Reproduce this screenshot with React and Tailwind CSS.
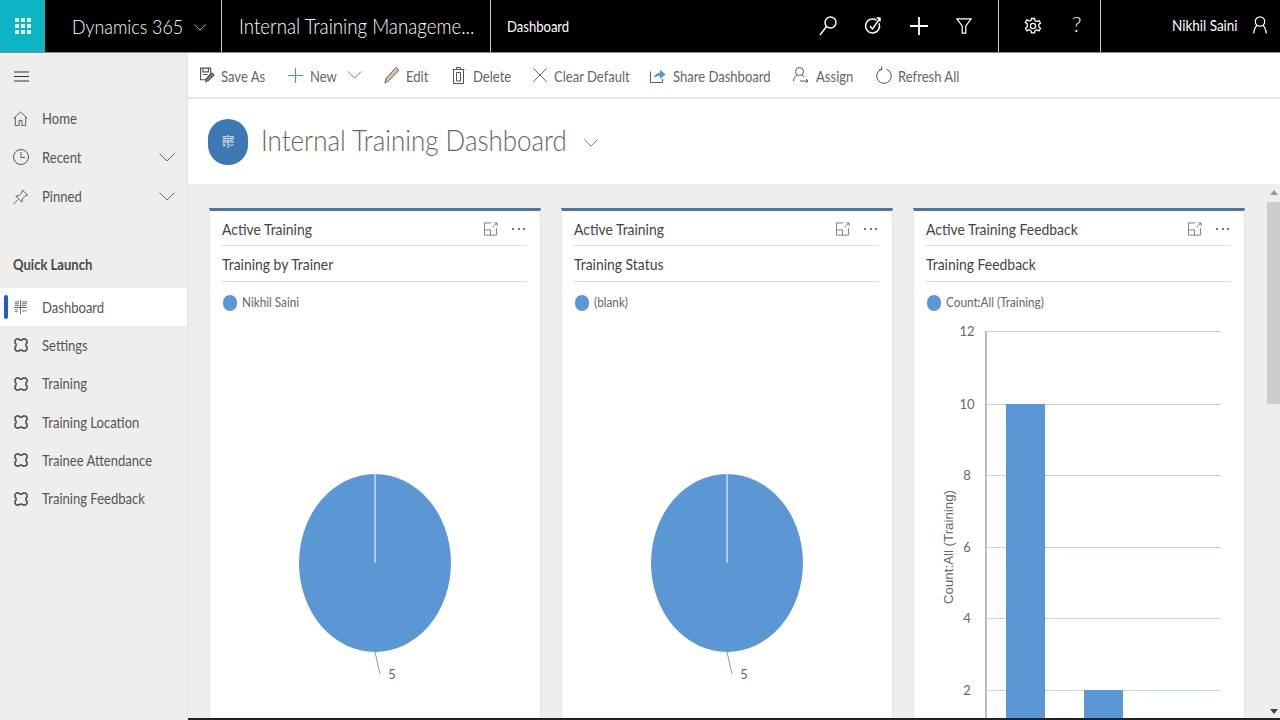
import React from 'react'

// text in the shot is squeezed horizontally, so labels get a fixed box and a scale-x
const T = ({ children, className = '' }) => (
  <span className={`inline-block origin-left scale-x-[.87] whitespace-nowrap ${className}`}>{children}</span>
)

const Chevron = ({ className }) => (
  <svg viewBox="0 0 16 9" className={className} fill="none" stroke="currentColor" strokeWidth="1">
    <path d="M.5.5 8 8 15.500.5" />
  </svg>
)

const Puzzle = () => (
  <svg viewBox="0 0 16 16" className="w-[16px] h-[18px] shrink-0" fill="none" stroke="#444" strokeWidth="1.500" strokeLinejoin="round">
    <path d="M3.500 2H6c.3 1.500 3.700 1.500 4 0h2.500L14 3.500V6c-1.500.3-1.500 3.700 0 4v2.500L12.500 14H10c-.3-1.500-3.700-1.500-4 0H3.500L2 12.500V10c1.500-.3 1.500-3.700 0-4V3.500z" />
  </svg>
)

const DashIcon = ({ className, stroke = '#666' }) => (
  <svg viewBox="0 0 16 16" className={className} fill="none" stroke={stroke} strokeWidth="1">
    <path d="M8 .5v15M2 2.500h4.500M2 4.500h4.500M2 6.500h4.500M9.500 2.500H15M9.500 4.500H15M9.500 6.500H14M1 8.500h14M2 11h3M2 13h3M10 11l1.500 2 1.500-1.500 1.500 1" />
  </svg>
)

const SideItem = ({ label, chevron, icon, active }) => (
  <div className={`h-[38.300px] flex items-center relative ${active ? 'bg-white' : ''}`}>
    {active && <div className="absolute left-[4px] top-[7px] w-[4px] h-[24px] rounded-sm bg-[#1f5fbf]" />}
    <div className="w-[42px] pl-[13px] flex items-center">{icon || <Puzzle />}</div>
    <T className="text-[15px] text-[#555]">{label}</T>
    {chevron && <Chevron className="w-[16px] h-[9px] ml-auto mr-[12px] text-[#666]" />}
  </div>
)

const Tool = ({ icon, label, className = '', labelWidth }) => (
  <div className={`flex items-center gap-[6px] text-[15px] text-[#666] ${className}`}>
    {icon}
    <span className={`pt-[2px] ${labelWidth}`}><T>{label}</T></span>
  </div>
)

const Card = ({ title, sub, legend, children }) => (
  <div className="w-[332px] h-[540px] shrink-0 bg-white border-x border-[#e3e3e3] border-t-[3px] border-t-[#4a76a8] pl-[12px] pr-[13px]">
    <div className="h-[35px] pt-[2px] border-b border-[#ddd] flex items-center justify-between">
      <T className="text-[16px] text-[#444]">{title}</T>
      <div className="flex items-center gap-[14px] pr-[2px] text-[#777]">
        <svg viewBox="0 0 15 14" className="w-[14px] h-[14px]" fill="none" stroke="currentColor">
          <path d="M8 .5H.5v13h13V6M.5 8H7v5.500M9 5l5-4.500M10.500.500H14V4" />
        </svg>
        <span className="w-[13px] flex justify-between">
          <i className="w-[2px] h-[2px] bg-[#777]" />
          <i className="w-[2px] h-[2px] bg-[#777]" />
          <i className="w-[2px] h-[2px] bg-[#777]" />
        </span>
      </div>
    </div>
    <div className="h-[36px] pt-[1px] border-b border-[#ddd] flex items-center text-[16px] text-[#444]"><T>{sub}</T></div>
    <div className="h-[41px] flex items-center pl-[1px] gap-[5px] text-[13.500px] text-[#666]">
      <span className="w-[14px] h-[16px] rounded-full bg-[#5b97d5]" />
      <T>{legend}</T>
    </div>
    {children}
  </div>
)

// chart area starts 323px from the top of the page
const Pie = () => (
  <svg viewBox="0 0 305 400" className="w-[305px] h-[400px] text-[#666]">
    <ellipse cx="153" cy="240" rx="76" ry="89" fill="#5b97d5" />
    <path d="M153 151v89" stroke="#fff" strokeWidth="1" />
    <path d="M153 329l5 22" stroke="#7a9cbf" strokeWidth="1" fill="none" />
    <text x="170" y="356" fontSize="13" textAnchor="middle" fill="#666">5</text>
  </svg>
)

const ticks = [
  { v: 12, y: 8 },
  { v: 10, y: 81 },
  { v: 8, y: 152 },
  { v: 6, y: 224 },
  { v: 4, y: 295 },
  { v: 2, y: 367 },
]

const Bars = () => (
  <svg viewBox="0 0 305 400" className="w-[305px] h-[400px]">
    {ticks.map((t) => (
      <g key={t.v}>
        <path d={`M60 ${t.y + 0.5}h235`} stroke="#c3d5dc" strokeWidth="1" />
        <text x="41" y={t.y + 5} fontSize="13" textAnchor="middle" fill="#666">{t.v}</text>
      </g>
    ))}
    <path d="M60 8v392" stroke="#a6a6a6" strokeWidth="1.500" />
    <rect x="80" y="81" width="39" height="319" fill="#5b97d5" />
    <rect x="158" y="367" width="39" height="33" fill="#5b97d5" />
    <text transform="translate(27 224) rotate(-90)" fontSize="13.300" textAnchor="middle" fill="#666" fontFamily="Liberation Sans">Count:All (Training)</text>
  </svg>
)

const App = () => {
  return (
    <div className="w-[1280px] h-[720px] overflow-hidden flex flex-col bg-white font-['Lato','Noto_Sans',sans-serif]">
      {/* top bar */}
      <header className="h-[53px] shrink-0 bg-black border-b border-[#8a8a8a] flex items-stretch text-white">
        <div className="w-[45px] bg-[#0cb4c4] flex items-center justify-center">
          <div className="grid grid-cols-3 gap-[2px]">
            {[...Array(9)].map((_, i) => (
              <span key={i} className="w-[4px] h-[4px] bg-white/90" />
            ))}
          </div>
        </div>
        <div className="w-[177px] pl-[27px] flex items-center border-r border-[#ccc]">
          <span className="w-[109px]"><T className="text-[20.500px] font-light">Dynamics 365</T></span>
          <Chevron className="w-[12px] h-[7px] ml-[13px] mt-[3px]" />
        </div>
        <div className="w-[269px] pl-[17px] flex items-center border-r border-[#ccc]">
          <T className="text-[21.500px] font-light">Internal Training Manageme...</T>
        </div>
        <div className="pl-[16px] flex items-center text-[15px]"><T>Dashboard</T></div>
        <div className="ml-auto flex items-center w-[188px] border-r border-[#ccc]">
          <svg viewBox="0 0 18 20" className="w-[18px] h-[20px] ml-[8px]" fill="none" stroke="#fff" strokeWidth="1.400">
            <circle cx="11.500" cy="6.500" r="5.500" /><path d="M7.500 10.500 1 19" />
          </svg>
          <svg viewBox="0 0 18 20" className="w-[18px] h-[20px] ml-[27px]" fill="none" stroke="#fff" strokeWidth="1.400">
            <path d="M12.500 4.200a7 7 0 1 0 2.500 3M6 10l2.500 3L16 2M12.500 2H16v3.500" />
          </svg>
          <svg viewBox="0 0 18 18" className="w-[18px] h-[18px] ml-[28px]" fill="none" stroke="#fff" strokeWidth="1.800">
            <path d="M9 0v18M0 9h18" />
          </svg>
          <svg viewBox="0 0 18 18" className="w-[16px] h-[18px] ml-[28px]" fill="none" stroke="#fff" strokeWidth="1.400">
            <path d="M1 1h16l-6 8v8H7V9z" />
          </svg>
        </div>
        <div className="w-[102px] flex items-center border-r border-[#ccc]">
          <svg viewBox="0 0 24 24" className="w-[18px] h-[20px] ml-[25px]" fill="none" stroke="#fff" strokeWidth="1.700">
            <circle cx="12" cy="12" r="3.500" />
            <path d="M10 2h4l.7 3 2.500 1.200 2.800-1.500 2 3.400-2.300 2.100v2.800l2.300 2.100-2 3.400-2.800-1.500-2.500 1.200-.7 3h-4l-.7-3-2.500-1.200-2.800 1.500-2-3.400 2.300-2.100V9.200L1.800 7.100l2-3.400 2.800 1.500L9.300 5z" />
          </svg>
          <span className="ml-[30px] text-[22px] font-light leading-none pb-[4px]">?</span>
        </div>
        <div className="w-[179px] flex items-center pl-[71px] text-[15.500px]">
          <span className="w-[65px]"><T>Nikhil Saini</T></span>
          <svg viewBox="0 0 14 18" className="w-[14px] h-[18px] ml-[16px] mb-[3px]" fill="none" stroke="#fff" strokeWidth="1.300">
            <circle cx="7" cy="5.500" r="4.700" /><path d="M.7 17.500c.5-5 2.500-7.500 3.500-8.300M13.300 17.500c-.5-5-2.500-7.500-3.500-8.300" />
          </svg>
        </div>
      </header>

      <div className="flex flex-1 min-h-0">
        {/* left nav */}
        <aside className="w-[188px] shrink-0 bg-[#eeeeee] border-r border-[#e3e3e3]">
          <div className="h-[46px] pl-[14px] flex items-center">
            <svg viewBox="0 0 15 11" className="w-[15px] h-[11px]" stroke="#333" strokeWidth="1.200">
              <path d="M0 1h15M0 5.500h15M0 10h15" />
            </svg>
          </div>
          <div>
            <SideItem label="Home" icon={
              <svg viewBox="0 0 16 16" className="w-[15px] h-[15px]" fill="none" stroke="#555">
                <path d="M.5 8 8 1l7.500 7M2.500 6.500v9h4V10h3v5.500h4v-9" />
              </svg>
            } />
            <div className="h-[1px]" />
            <SideItem label="Recent" chevron icon={
              <svg viewBox="0 0 16 16" className="w-[16px] h-[16px]" fill="none" stroke="#555">
                <circle cx="8" cy="8" r="7.500" /><path d="M8 3v5.500h4" />
              </svg>
            } />
            <div className="h-[1px]" />
            <SideItem label="Pinned" chevron icon={
              <svg viewBox="0 0 16 16" className="w-[15px] h-[16px]" fill="none" stroke="#555">
                <path d="M10 .5 15.500 6l-2 .5-3.500 3.500-.5 3.500-6.500-6.500 3.500-.5L10 2.500zM5 11l-4.500 4.500" />
              </svg>
            } />
          </div>
          <div className="h-[69px] flex items-end pb-[9px] pl-[13px] text-[15px] font-bold text-[#4a4a4a]">
            <T>Quick Launch</T>
          </div>
          <div className="mt-[3px]">
            <SideItem active label="Dashboard" icon={<DashIcon className="w-[15px] h-[16px]" />} />
            <SideItem label="Settings" />
            <SideItem label="Training" />
            <SideItem label="Training Location" />
            <SideItem label="Trainee Attendance" />
            <SideItem label="Training Feedback" />
          </div>
        </aside>

        <main className="flex-1 min-w-0 flex flex-col">
          {/* command bar */}
          <div className="h-[46px] shrink-0 border-b-2 border-[#e6e6e6] flex items-center pl-[12px]">
            <Tool labelWidth="w-[45px]" label="Save As" icon={
              <svg viewBox="0 0 16 16" className="w-[15px] h-[16px]" fill="none" stroke="#555" strokeWidth="1.200">
                <path d="M.6.6h10.800v6L6 13H.6zM3 .6v4h6v-4M3 7.500h5" /><path d="m6 15 1-3 6-6 2 2-6 6z" fill="#888" />
              </svg>
            } />
            <Tool className="ml-[22px] gap-[7px]" labelWidth="w-[26px]" label="New" icon={
              <svg viewBox="0 0 15 15" className="w-[15px] h-[15px]" stroke="#5a9c82" strokeWidth="1.200"><path d="M7.500 0v15M0 7.500h15" /></svg>
            } />
            <Chevron className="w-[15px] h-[8px] ml-[11px] text-[#666]" />
            <Tool className="ml-[22px]" labelWidth="w-[22px]" label="Edit" icon={
              <svg viewBox="0 0 16 18" className="w-[16px] h-[18px]" fill="#d8c49a" stroke="#666">
                <path d="m.8 17 1.500-5L12 1.500l3 2.800L5 14.500z" />
              </svg>
            } />
            <Tool className="ml-[24px] gap-[8px]" labelWidth="w-[37px]" label="Delete" icon={
              <svg viewBox="0 0 13 17" className="w-[13px] h-[17px]" fill="none" stroke="#555">
                <path d="M1.500 3v13.500h10V3M.5 2.500h12M4.500 2.500V.5h4v2M4.500 5.500v8.500h4V5.500z" />
              </svg>
            } />
            <Tool className="ml-[23px] gap-[7px]" labelWidth="w-[75px]" label="Clear Default" icon={
              <svg viewBox="0 0 14 14" className="w-[14px] h-[14px]" stroke="#666"><path d="M.5.5l13 13M13.500.5l-13 13" /></svg>
            } />
            <Tool className="ml-[21px] gap-[7px]" labelWidth="w-[99px]" label="Share Dashboard" icon={
              <svg viewBox="0 0 16 15" className="w-[16px] h-[15px]" fill="none">
                <path d="M.5 3.500v11h12V11" stroke="#2d6ca8" />
                <path d="M4 10c.5-3.500 3-5 6-5V1.500l5.500 5-5.500 4.500V8c-2.500 0-4.500.5-6 2z" fill="#5b97d5" />
              </svg>
            } />
            <Tool className="ml-[21px] gap-[7px]" labelWidth="w-[38px]" label="Assign" icon={
              <svg viewBox="0 0 16 17" className="w-[16px] h-[17px]" fill="none" stroke="#555">
                <circle cx="6.500" cy="4.500" r="4" /><path d="M.5 14c.3-3 1.500-5 3.500-6M9 8c1 .5 1.600 1.200 2 2M7 14h8M13 12l2 2-2 2" />
              </svg>
            } />
            <Tool className="ml-[22px]" labelWidth="w-[61px]" label="Refresh All" icon={
              <svg viewBox="0 0 16 18" className="w-[16px] h-[18px]" fill="none" stroke="#555">
                <path d="M10.500 3.200a7.300 7.300 0 1 1-5 0M5.500 .5l.5 3-3 .5" />
              </svg>
            } />
          </div>

          {/* page title */}
          <div className="h-[85px] shrink-0 flex items-center pl-[20px]">
            <div className="w-[40px] h-[46px] rounded-full bg-[#3c78b4] flex items-center justify-center">
              <DashIcon className="w-[14px] h-[15px]" stroke="#fff" />
            </div>
            <h1 className="ml-[13px] w-[305px] pb-[2px] text-[29.800px] font-light text-[#666]"><T>Internal Training Dashboard</T></h1>
            <Chevron className="w-[14px] h-[8px] ml-[18px] mt-[2px] text-[#666]" />
          </div>

          {/* dashboard body */}
          <div className="flex-1 min-h-0 bg-[#eeeeee] flex overflow-hidden relative">
            <div className="flex gap-[20px] pl-[21px] pt-[24px]">
              <Card title="Active Training" sub="Training by Trainer" legend="Nikhil Saini"><Pie /></Card>
              <Card title="Active Training" sub="Training Status" legend="(blank)"><Pie /></Card>
              <Card title="Active Training Feedback" sub="Training Feedback" legend="Count:All (Training)"><Bars /></Card>
            </div>
            {/* scrollbar */}
            <div className="ml-auto w-[13px] h-full flex flex-col items-center pt-[6px]">
              <span className="w-0 h-0 border-x-[4px] border-x-transparent border-b-[5px] border-b-[#999]" />
              <div className="w-[13px] h-[202px] bg-[#cdcdcd] mt-[7px]" />
              <span className="mt-auto mb-[6px] w-0 h-0 border-x-[4px] border-x-transparent border-t-[5px] border-t-[#444]" />
            </div>
            <div className="absolute bottom-0 inset-x-0 h-[2px] bg-[#222]" />
          </div>
        </main>
      </div>
    </div>
  )
}

export default App
